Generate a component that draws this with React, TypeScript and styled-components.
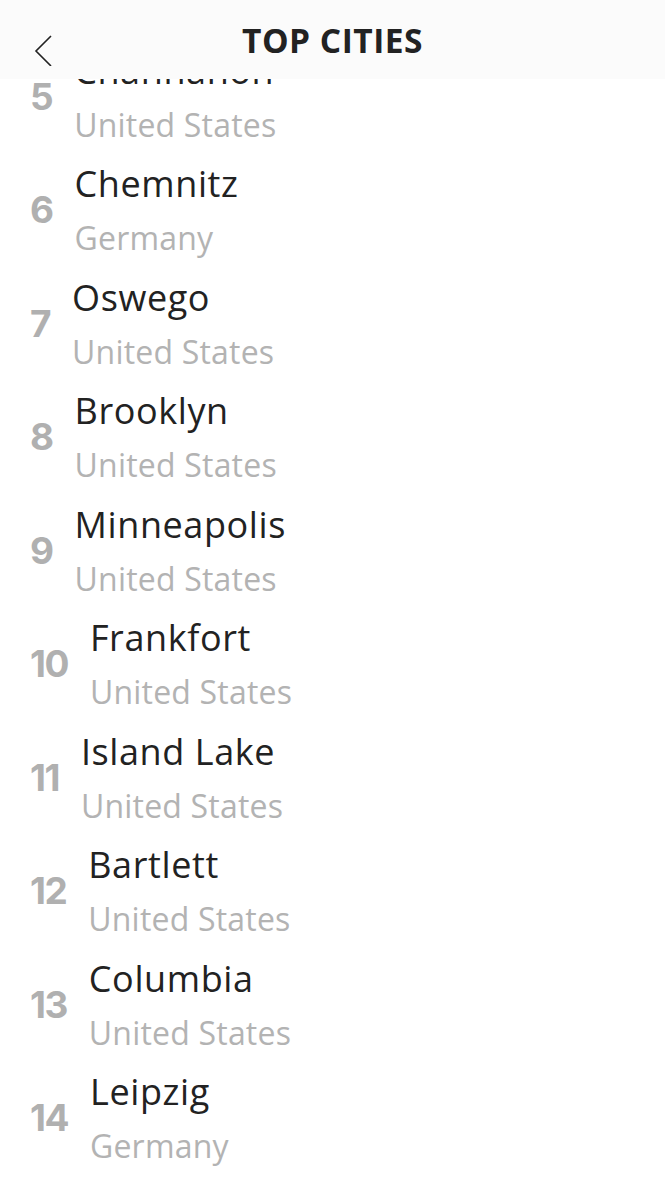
import React from "react";
import styled, { createGlobalStyle } from "styled-components";

const GlobalStyle = createGlobalStyle`
  html, body {
    margin: 0;
    padding: 0;
    background: #ffffff;
  }
  body {
    font-family: "Open Sans", "Liberation Sans", sans-serif;
    -webkit-font-smoothing: antialiased;
  }
`;

const Page = styled.div`
  width: 665px;
  height: 1200px;
  overflow: hidden;
  position: relative;
  background: #ffffff;
`;

const Header = styled.header`
  position: absolute;
  top: 0;
  left: 0;
  right: 0;
  height: 79px;
  background: #fbfbfb;
  display: flex;
  align-items: center;
  justify-content: center;
  z-index: 2;
`;

const BackButton = styled.button`
  position: absolute;
  left: 30px;
  top: 32px;
  width: 26px;
  height: 36px;
  padding: 0;
  border: none;
  background: transparent;
  display: flex;
  align-items: center;
  justify-content: center;
`;

const Title = styled.h1`
  margin: 0;
  margin-top: 3px;
  font-family: "Open Sans", "Liberation Sans", sans-serif;
  font-weight: 700;
  font-size: 33.5px;
  letter-spacing: 0.5px;
  color: #222222;
  line-height: 1;
`;

const List = styled.ol`
  list-style: none;
  margin: 0;
  padding: 40px 0 0 0;
`;

const Row = styled.li`
  height: 113.5px;
  display: flex;
  align-items: center;
  padding-left: 30px;
  gap: 22px;
`;

const Rank = styled.span`
  font-family: "Inter", "Open Sans", sans-serif;
  font-variant-numeric: proportional-nums;
  font-weight: 700;
  font-size: 37px;
  letter-spacing: -1.5px;
  color: #b0b0b0;
  line-height: 1.2;
`;

const Texts = styled.div`
  display: flex;
  flex-direction: column;
  padding-top: 3px;
`;

const City = styled.span`
  font-size: 36px;
  letter-spacing: 0.6px;
  line-height: 52px;
  color: #222222;
  white-space: nowrap;
`;

const Country = styled.span`
  font-size: 32px;
  letter-spacing: 0.2px;
  line-height: 55px;
  color: #b3b3b3;
  white-space: nowrap;
`;

const cities: { rank: number; city: string; country: string }[] = [
  { rank: 5, city: "Channahon", country: "United States" },
  { rank: 6, city: "Chemnitz", country: "Germany" },
  { rank: 7, city: "Oswego", country: "United States" },
  { rank: 8, city: "Brooklyn", country: "United States" },
  { rank: 9, city: "Minneapolis", country: "United States" },
  { rank: 10, city: "Frankfort", country: "United States" },
  { rank: 11, city: "Island Lake", country: "United States" },
  { rank: 12, city: "Bartlett", country: "United States" },
  { rank: 13, city: "Columbia", country: "United States" },
  { rank: 14, city: "Leipzig", country: "Germany" },
];

export default function App() {
  return (
    <Page>
      <GlobalStyle />
      <Header>
        <BackButton aria-label="Back">
          <svg width="22" height="32" viewBox="0 0 22 32" fill="none">
            <path d="M19 2 L4 17 L19 32" stroke="#222" strokeWidth="1.6" />
          </svg>
        </BackButton>
        <Title>TOP CITIES</Title>
      </Header>
      <List>
        {cities.map((c) => (
          <Row key={c.rank}>
            <Rank>{c.rank}</Rank>
            <Texts>
              <City>{c.city}</City>
              <Country>{c.country}</Country>
            </Texts>
          </Row>
        ))}
      </List>
    </Page>
  );
}
